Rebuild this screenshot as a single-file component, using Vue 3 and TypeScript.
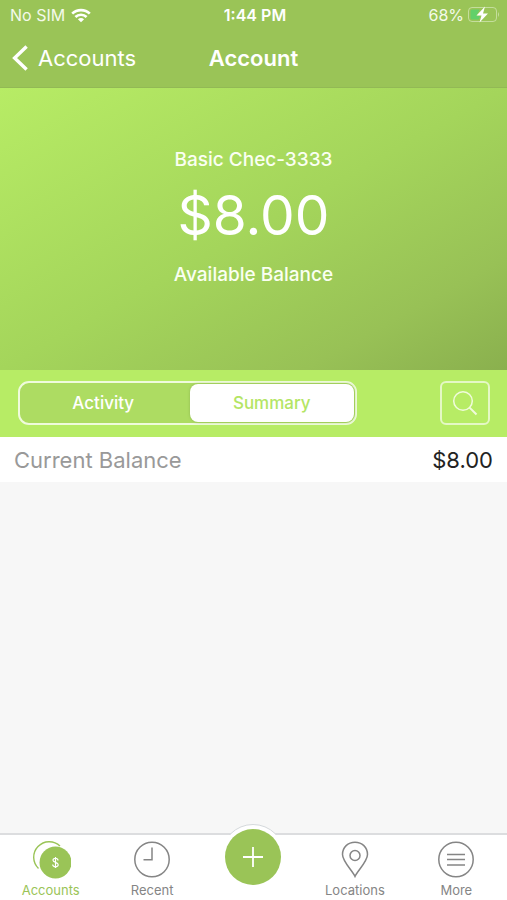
<script setup lang="ts">
import { ref } from 'vue'

type View = 'Activity' | 'Summary'

interface SummaryRow {
  label: string
  value: string
}

const views: View[] = ['Activity', 'Summary']
const activeView = ref<View>('Summary')
const rows: SummaryRow[] = [{ label: 'Current Balance', value: '$8.00' }]
</script>

<template>
  <div class="screen">
    <header class="top">
      <div class="status">
        <div class="carrier">
          <span>No SIM</span>
          <svg width="20" height="15" viewBox="0 0 20 15" fill="none" stroke="#fff" stroke-width="2.7" aria-hidden="true">
            <path d="M1.2 5.6C6 .9 14 .9 18.8 5.6" />
            <path d="M4.4 9C7.5 6 12.5 6 15.6 9" />
            <path d="M10 14.2L6.9 11.2Q10 8.7 13.1 11.2Z" fill="#fff" stroke="none" />
          </svg>
        </div>
        <span class="time">1:44 PM</span>
        <div class="battery">
          <span>68%</span>
          <svg width="33" height="18" viewBox="0 0 33 18" fill="none" aria-hidden="true">
            <rect x="1.5" y="1.5" width="28" height="14" rx="3.5" stroke="#d5e8b9" stroke-opacity=".7" />
            <path d="M31 6Q33 8.500 31 11Z" fill="#d5e8b9" fill-opacity=".75" />
            <path d="M5 3.500H12.500L9.500 10H13L12 13.500H5Q3.500 13.500 3.500 12V5Q3.500 3.500 5 3.500Z" fill="#62d06a" />
            <path d="M18 .5L9.500 9.500H14.500L12.500 16.500L21 7.500H16Z" fill="#fff" />
          </svg>
        </div>
      </div>
      <nav class="titlebar">
        <a class="back" href="#accounts">
          <svg width="17" height="26" viewBox="0 0 17 26" fill="none" stroke="#fff" stroke-width="3.4" aria-hidden="true">
            <path d="M14.600 1.500L2.600 13L14.600 24.500" />
          </svg>
          <span>Accounts</span>
        </a>
        <h1>Account</h1>
      </nav>
    </header>

    <section class="hero">
      <p class="caption">Basic Chec-3333</p>
      <p class="amount">$8.00</p>
      <p class="caption">Available Balance</p>
    </section>

    <div class="toolbar">
      <div class="segmented" role="tablist">
        <button
          v-for="view in views"
          :key="view"
          type="button"
          role="tab"
          :aria-selected="activeView === view"
          :class="['segment', { selected: activeView === view }]"
          @click="activeView = view"
        >
          {{ view }}
        </button>
      </div>
      <button class="search" type="button" aria-label="Search">
        <svg width="26" height="26" viewBox="0 0 26 26" fill="none" stroke="#f0fbdc" stroke-width="1.5" aria-hidden="true">
          <circle cx="11" cy="11" r="9.3" />
          <path d="M17.6 17.6L24.5 24.5" stroke-width="2" />
        </svg>
      </button>
    </div>

    <main class="content">
      <dl class="rows">
        <div v-for="row in rows" :key="row.label" class="row">
          <dt>{{ row.label }}</dt>
          <dd>{{ row.value }}</dd>
        </div>
      </dl>
    </main>

    <nav class="tabbar">
      <a class="tab active" href="#accounts">
        <svg width="40" height="40" viewBox="0 0 40 40" fill="none" aria-hidden="true">
          <path d="M7.500 29.500A15.500 15.500 0 1 1 29 7" stroke="#9ac457" stroke-width="1.4" />
          <circle cx="24.500" cy="23.500" r="16" fill="#9ac457" />
          <path d="M27 21.400C26.900 18.600 22 18.600 22 21.200C22 23.800 27.200 22.900 27.200 25.700C27.200 28.500 21.800 28.500 21.700 25.500M24.500 18V29" stroke="#fff" stroke-width="1.2" />
        </svg>
        <span>Accounts</span>
      </a>
      <a class="tab" href="#recent">
        <svg width="40" height="40" viewBox="0 0 40 40" fill="none" stroke="#858585" stroke-width="1.5" aria-hidden="true">
          <circle cx="20" cy="20.5" r="17.2" />
          <path d="M20 8.5V20.7H11.5" />
        </svg>
        <span>Recent</span>
      </a>
      <div class="add-slot">
        <button class="add" type="button" aria-label="Add">
          <svg width="22" height="22" viewBox="0 0 22 22" fill="none" stroke="#fff" stroke-width="1.8" aria-hidden="true">
            <path d="M11 1V21M1 11H21" />
          </svg>
        </button>
      </div>
      <a class="tab" href="#locations">
        <svg width="40" height="40" viewBox="0 0 40 40" fill="none" stroke="#858585" stroke-width="1.5" aria-hidden="true">
          <path d="M20 37.5C17.5 31.8 7.5 22.5 7.5 15.5C7.5 8.2 13 3.2 20 3.2S32.5 8.2 32.5 15.5C32.5 22.5 22.5 31.8 20 37.5Z" />
          <circle cx="20" cy="16.5" r="5" />
        </svg>
        <span>Locations</span>
      </a>
      <a class="tab" href="#more">
        <svg width="40" height="40" viewBox="0 0 40 40" fill="none" stroke="#858585" stroke-width="1.5" aria-hidden="true">
          <circle cx="20" cy="20.5" r="17.2" />
          <path d="M11 15.5H29M11 20.5H29M11 26H29" />
        </svg>
        <span>More</span>
      </a>
    </nav>
  </div>
</template>

<style>
body {
  margin: 0;
}
</style>

<style scoped>
.screen {
  display: flex;
  flex-direction: column;
  min-height: 100vh;
  background: #f7f7f7;
  font-family: Inter, "Liberation Sans", sans-serif;
  color: #fff;
}

a {
  color: inherit;
  text-decoration: none;
}

button {
  padding: 0;
  border: 0;
  font-family: inherit;
  cursor: pointer;
}

svg {
  display: block;
  flex: none;
}

.top {
  box-sizing: border-box;
  height: 88px;
  background: #9ac457;
  border-bottom: 1px solid #92b955;
}

.status,
.titlebar {
  display: grid;
  grid-template-columns: 1fr auto 1fr;
  align-items: center;
}

.status {
  height: 30px;
  padding: 0 7px 0 10px;
  font-size: 16px;
  line-height: 20px;
}

.carrier,
.battery {
  display: flex;
  align-items: center;
  color: #f4faea;
}

.carrier {
  gap: 6px;
}

.battery {
  justify-content: flex-end;
  gap: 3px;
}

.time {
  font-weight: 600;
}

.titlebar {
  height: 56px;
  padding: 0 12px;
}

.back {
  display: flex;
  align-items: center;
  gap: 9px;
  font-size: 22px;
  line-height: 28px;
}

h1 {
  margin: 0;
  font-size: 22px;
  font-weight: 600;
  line-height: 28px;
}

.hero {
  box-sizing: border-box;
  display: flex;
  flex-direction: column;
  align-items: center;
  min-height: 282px;
  padding: 60px 16px;
  background: linear-gradient(to bottom right, #b7ec65 0%, #a4d55b 50%, #98c156 80%, #8ab04e 100%);
}

.caption,
.amount {
  margin: 0;
}

.caption {
  font-size: 19px;
  font-weight: 500;
  line-height: 24px;
  color: #fafff2;
}

.amount {
  padding: 10px 0 15px;
  font-size: 55px;
  line-height: 66px;
}

.toolbar {
  display: grid;
  grid-template-columns: 1fr 50px;
  gap: 83px;
  padding: 11px 17px 12px 18px;
  background: #b7ec65;
}

.segmented {
  box-sizing: border-box;
  display: grid;
  grid-template-columns: 1fr 1fr;
  gap: 4px;
  height: 44px;
  padding: 1px;
  border: 2px solid #effbdc;
  border-radius: 11px;
  background: #addc62;
}

.segment {
  border-radius: 8px;
  background: transparent;
  color: #fff;
  font-size: 17px;
  font-weight: 500;
  line-height: 22px;
}

.segment.selected {
  background: #fff;
  color: #b3e564;
  box-shadow: 0 0 3px #8fb852;
}

.search {
  box-sizing: border-box;
  display: grid;
  place-items: center;
  height: 44px;
  border: 2px solid #e4f8c5;
  border-radius: 6px;
  background: transparent;
}

.content {
  flex: 1;
}

.rows {
  margin: 0;
  background: #fff;
}

.row {
  display: flex;
  align-items: center;
  justify-content: space-between;
  height: 45px;
  padding: 0 14px;
  font-size: 22px;
  line-height: 28px;
}

dt {
  color: #999;
}

dd {
  margin: 0;
  color: #222;
}

.tabbar {
  display: grid;
  grid-template-columns: repeat(5, 1fr);
  height: 65px;
  border-top: 2px solid #dcdddf;
  background: #fff;
}

.tab {
  display: flex;
  flex-direction: column;
  align-items: center;
  gap: 2px;
  padding-top: 4px;
  color: #858585;
  font-size: 13px;
  line-height: 18px;
}

.tab.active {
  color: #9ac457;
}

.add-slot {
  display: flex;
  justify-content: center;
  align-items: flex-start;
  position: relative;
}

.add-slot::before {
  content: "";
  position: absolute;
  top: -11px;
  left: 50%;
  width: 64px;
  height: 64px;
  box-sizing: border-box;
  border: 1px solid #d5d9dc;
  border-radius: 50%;
  background: #fff;
  transform: translateX(-50%);
}

.add-slot::after {
  content: "";
  position: absolute;
  inset: 0;
  background: #fff;
}

.add {
  position: absolute;
  z-index: 1;
  top: -6px;
  display: grid;
  place-items: center;
  width: 56px;
  height: 56px;
  border-radius: 50%;
  background: #9ac457;
}
</style>
